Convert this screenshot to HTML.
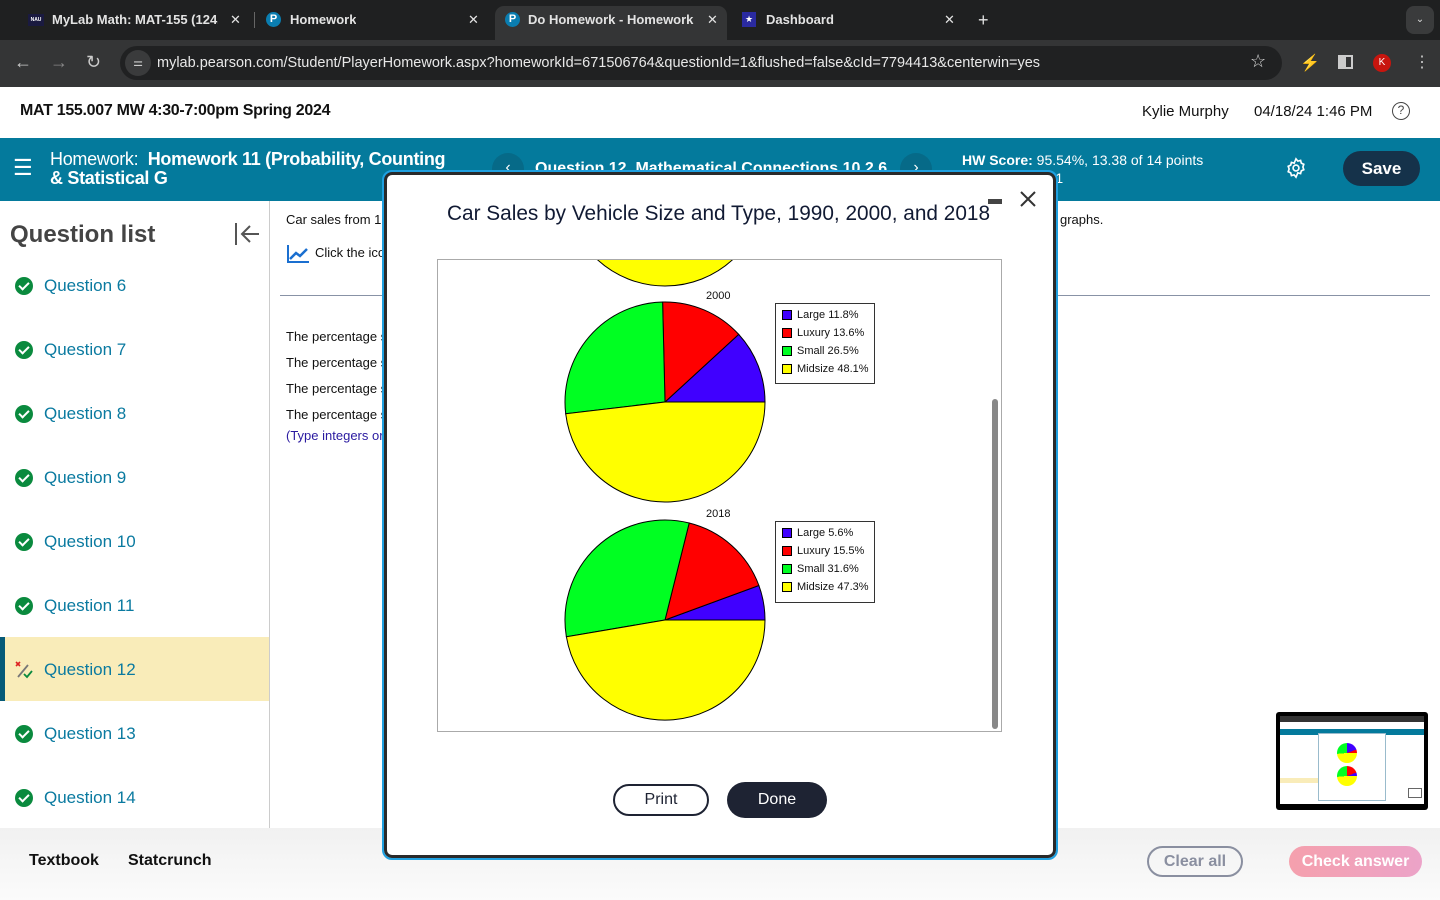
<!DOCTYPE html>
<html><head><meta charset="utf-8">
<style>
*{margin:0;padding:0;box-sizing:border-box}
body{width:1440px;height:900px;overflow:hidden;position:relative;font-family:"Liberation Sans",Arial,sans-serif;background:#fff}
.a{position:absolute}
.tab{position:absolute;top:8px;height:24px;color:#e3e3e3;font-size:13px;font-weight:bold;line-height:24px;white-space:nowrap;overflow:hidden}
.q{position:absolute;left:15px;font-size:17px;color:#0a7aa0}
.chk{position:absolute;left:0;top:0;width:18px;height:18px;border-radius:50%;background:#0a8a3e}
.chk::after{content:"";position:absolute;left:6px;top:3px;width:4px;height:8px;border:solid #fff;border-width:0 2px 2px 0;transform:rotate(45deg)}
.q span.t{position:absolute;left:29px;top:-1px;white-space:nowrap}
.pct{position:absolute;left:286px;font-size:13px;color:#111}
</style></head><body>
<div class="a" style="left:0;top:0;width:1440px;height:40px;background:#1f2021"></div>
<div class="a" style="left:0;top:40px;width:1440px;height:47px;background:#343536"></div>
<div class="a" style="left:495px;top:6px;width:232px;height:36px;background:#343536;border-radius:9px 9px 0 0"></div>
<div class="a" style="left:28px;top:14px;width:16px;height:12px;background:#1a1a40;color:#fff;font-size:5px;font-weight:bold;line-height:12px;text-align:center">NAU</div>
<div class="tab" style="left:52px;width:166px">MyLab Math: MAT-155 (1241</div><div class="tab" style="left:230px;font-weight:normal">✕</div>
<div class="a" style="left:254px;top:12px;width:1px;height:16px;background:#666"></div>
<div class="a" style="left:266px;top:12px;width:15px;height:15px;border-radius:50%;background:#0a7db0;color:#fff;font-size:11px;text-align:center;line-height:15px;font-weight:bold">P</div>
<div class="tab" style="left:290px">Homework</div><div class="tab" style="left:468px;font-weight:normal">✕</div>
<div class="a" style="left:505px;top:12px;width:15px;height:15px;border-radius:50%;background:#0a7db0;color:#fff;font-size:11px;text-align:center;line-height:15px;font-weight:bold">P</div>
<div class="tab" style="left:528px;width:166px">Do Homework - Homework 1</div><div class="tab" style="left:707px;font-weight:normal">✕</div>
<div class="a" style="left:742px;top:12px;width:14px;height:15px;background:#2a2aa0;color:#fff;font-size:9px;text-align:center;line-height:15px">★</div>
<div class="tab" style="left:766px">Dashboard</div><div class="tab" style="left:944px;font-weight:normal">✕</div>
<div class="tab" style="left:978px;font-size:18px;font-weight:normal">+</div>
<div class="a" style="left:1406px;top:6px;width:28px;height:28px;border-radius:8px;background:#3a3b3c;color:#ddd;text-align:center;line-height:28px;font-size:10px">⌄</div>
<div class="a" style="left:14px;top:52px;color:#ccc;font-size:18px">←</div>
<div class="a" style="left:50px;top:52px;color:#888;font-size:18px">→</div>
<div class="a" style="left:86px;top:52px;color:#ccc;font-size:18px">↻</div>
<div class="a" style="left:120px;top:46px;width:1162px;height:34px;border-radius:17px;background:#202122"></div>
<div class="a" style="left:125px;top:50px;width:26px;height:26px;border-radius:13px;background:#3a3b3c;color:#ccc;font-size:11px;text-align:center;line-height:26px">⚌</div>
<div class="a" style="left:157px;top:55px;color:#e8e8e8;font-size:14.5px;white-space:nowrap">mylab.pearson.com/Student/PlayerHomework.aspx?homeworkId=671506764&amp;questionId=1&amp;flushed=false&amp;cId=7794413&amp;centerwin=yes</div>
<div class="a" style="left:1250px;top:51px;color:#ddd;font-size:18px">☆</div>
<div class="a" style="left:1300px;top:53px;color:#ccc;font-size:16px">⚡</div>
<div class="a" style="left:1338px;top:55px;width:15px;height:14px;border:2px solid #ccc;border-left-width:8px"></div>
<div class="a" style="left:1373px;top:54px;width:18px;height:18px;border-radius:50%;background:#c8150e;color:#fff;font-size:10px;text-align:center;line-height:18px">K</div>
<div class="a" style="left:1414px;top:52px;color:#ccc;font-size:16px">⋮</div>
<div class="a" style="left:20px;top:102px;font-size:16px;color:#111;font-weight:bold;letter-spacing:-0.3px">MAT 155.007 MW 4:30-7:00pm Spring 2024</div>
<div class="a" style="left:1142px;top:103px;font-size:15px;color:#111">Kylie Murphy</div>
<div class="a" style="left:1254px;top:103px;font-size:15px;color:#111">04/18/24 1:46 PM</div>
<div class="a" style="left:1392px;top:102px;width:18px;height:18px;border:1.5px solid #444;border-radius:50%;font-size:12px;text-align:center;line-height:15px;color:#444">?</div>
<div class="a" style="left:0;top:138px;width:1440px;height:63px;background:#047a9c"></div>
<div class="a" style="left:13px;top:155px;color:#fff;font-size:22px">☰</div>
<div class="a" style="left:50px;top:150px;color:#fff;font-size:18px;line-height:19px;width:420px;letter-spacing:-0.3px"><span style="font-weight:normal">Homework:</span>&nbsp; <b>Homework 11 (Probability, Counting<br>&amp; Statistical G</b></div>
<div class="a" style="left:492px;top:153px;width:32px;height:32px;border-radius:50%;background:#066a88;color:#fff;text-align:center;line-height:30px">‹</div>
<div class="a" style="left:535px;top:160px;color:#fff;font-size:16px;font-weight:bold">Question 12, Mathematical Connections 10.2.6</div>
<div class="a" style="left:900px;top:153px;width:32px;height:32px;border-radius:50%;background:#066a88;color:#fff;text-align:center;line-height:30px">›</div>
<div class="a" style="left:962px;top:151px;color:#fff;font-size:14px;line-height:18px"><b>HW Score:</b> 95.54%, 13.38 of 14 points<br>Points: 0.38 of 1</div>
<svg class="a" style="left:1285px;top:157px" width="22" height="22" viewBox="0 0 24 24"><circle cx="12" cy="12" r="3.2" fill="none" stroke="#fff" stroke-width="1.8"/><path d="M12 2l2 2.5 3-.8.8 3 2.7 1.3-1 2.9 1 2.9-2.7 1.3-.8 3-3-.8L12 22l-2-2.5-3 .8-.8-3-2.7-1.3 1-2.9-1-2.9 2.7-1.3.8-3 3 .8z" fill="none" stroke="#fff" stroke-width="1.8"/></svg>
<div class="a" style="left:1343px;top:151px;width:77px;height:35px;border-radius:18px;background:#15324a;color:#fff;font-size:17px;font-weight:bold;text-align:center;line-height:35px">Save</div>
<div class="a" style="left:269px;top:201px;width:1px;height:627px;background:#ccc"></div>
<div class="a" style="left:10px;top:221px;font-size:24px;font-weight:bold;color:#444">Question list</div>
<svg class="a" style="left:234px;top:222px" width="26" height="24"><path d="M2 1V23M8 12H25M16 4L8 12L16 20" stroke="#555" stroke-width="2" fill="none"/></svg>
<div class="a" style="left:0;top:637px;width:269px;height:64px;background:#f9ecb9;border-left:5px solid #065a78"></div>
<div class="q" style="top:277px"><div class="chk"></div><span class="t">Question 6</span></div>
<div class="q" style="top:341px"><div class="chk"></div><span class="t">Question 7</span></div>
<div class="q" style="top:405px"><div class="chk"></div><span class="t">Question 8</span></div>
<div class="q" style="top:469px"><div class="chk"></div><span class="t">Question 9</span></div>
<div class="q" style="top:533px"><div class="chk"></div><span class="t">Question 10</span></div>
<div class="q" style="top:597px"><div class="chk"></div><span class="t">Question 11</span></div>
<div class="q" style="top:661px"><svg style="position:absolute;left:0;top:0" width="18" height="18"><path d="M1 1L5 5M5 1L1 5" stroke="#d22" stroke-width="1.6"/><path d="M3 16L13 4" stroke="#777" stroke-width="1.8"/><path d="M9 13L12 16L17 10" stroke="#0a8a3e" stroke-width="1.8" fill="none"/></svg><span class="t">Question 12</span></div>
<div class="q" style="top:725px"><div class="chk"></div><span class="t">Question 13</span></div>
<div class="q" style="top:789px"><div class="chk"></div><span class="t">Question 14</span></div>
<div class="a" style="left:286px;top:212px;font-size:13px;color:#111">Car sales from 1990</div>
<div class="a" style="left:1060px;top:212px;font-size:13px;color:#111">graphs.</div>
<svg class="a" style="left:287px;top:244px" width="23" height="20"><path d="M1 1V18H22" stroke="#1a6fd0" stroke-width="2" fill="none"/><path d="M3 15L9 9L13 12L20 5" stroke="#1a6fd0" stroke-width="2.5" fill="none"/></svg>
<div class="a" style="left:315px;top:245px;font-size:13px;color:#111">Click the icon</div>
<div class="a" style="left:280px;top:295px;width:1150px;height:1px;background:#8892a6"></div>
<div class="pct" style="top:329px">The percentage s</div>
<div class="pct" style="top:355px">The percentage s</div>
<div class="pct" style="top:381px">The percentage s</div>
<div class="pct" style="top:407px">The percentage s</div>
<div class="pct" style="top:428px;color:#2a1aa0">(Type integers or</div>
<div class="a" style="left:0;top:828px;width:1440px;height:72px;background:linear-gradient(#f1f1f1,#fbfbfb)"></div>
<div class="a" style="left:29px;top:852px;font-size:16px;font-weight:bold;color:#111">Textbook</div>
<div class="a" style="left:128px;top:852px;font-size:16px;font-weight:bold;color:#111">Statcrunch</div>
<div class="a" style="left:1147px;top:846px;width:96px;height:31px;border:2px solid #8a8fa0;border-radius:16px;color:#8a8fa0;font-size:16px;font-weight:bold;text-align:center;line-height:27px">Clear all</div>
<div class="a" style="left:1289px;top:846px;width:133px;height:31px;border-radius:16px;background:linear-gradient(90deg,#f5a0ad,#eca3c8);color:#fff;font-size:16px;font-weight:bold;text-align:center;line-height:31px">Check answer</div>
<div class="a" style="left:1276px;top:712px;width:152px;height:98px;background:#000;border-radius:3px"></div>
<div class="a" style="left:1280px;top:716px;width:144px;height:88px;background:#fff"></div>
<div class="a" style="left:1280px;top:716px;width:144px;height:6px;background:#333"></div>
<div class="a" style="left:1280px;top:729px;width:144px;height:6px;background:#047a9c"></div>
<div class="a" style="left:1280px;top:778px;width:38px;height:5px;background:#f9ecb9"></div>
<div class="a" style="left:1318px;top:733px;width:68px;height:68px;border:1px solid #9bc;background:#fff"></div>
<div class="a" style="left:1337px;top:743px;width:20px;height:20px;border-radius:50%;background:conic-gradient(#4000ff 70deg,#f00 70deg 90deg,#ff0 90deg 265deg,#0f2 265deg)"></div>
<div class="a" style="left:1337px;top:766px;width:20px;height:20px;border-radius:50%;background:conic-gradient(#f00 0 70deg,#4000ff 70deg 90deg,#ff0 90deg 265deg,#0f2 265deg)"></div>
<div class="a" style="left:1408px;top:788px;width:14px;height:10px;border:1px solid #666"></div>
<div class="a" style="left:384px;top:172px;width:672px;height:686px;border:3px solid #2a2a2a;outline:2px solid #1fa0e0;border-radius:8px;background:#fff"></div>
<div class="a" style="left:447px;top:202px;font-size:20.8px;color:#111a33">Car Sales by Vehicle Size and Type, 1990, 2000, and 2018</div>
<div class="a" style="left:988px;top:199px;width:14px;height:5px;background:#444"></div>
<svg class="a" style="left:1019px;top:190px" width="18" height="18"><path d="M2 2L16 16M16 2L2 16" stroke="#333" stroke-width="2"/></svg>
<svg class="a" style="left:437px;top:259px" width="565" height="473" viewBox="437 259 565 473">
<rect x="437.5" y="259.5" width="564" height="472" fill="#fff" stroke="#aaa"/>
<clipPath id="c"><rect x="437" y="260" width="564" height="472"/></clipPath>
<g stroke="#000" stroke-width="1">
<circle cx="665" cy="186" r="100" fill="#ff0" clip-path="url(#c)"/>
<path d="M665 402L765 402A100 100 0 0 0 738.7 334.4Z" fill="#4000ff"/>
<path d="M665 402L738.7 334.4A100 100 0 0 0 662.6 302Z" fill="#f00"/>
<path d="M665 402L662.6 302A100 100 0 0 0 565.7 413.8Z" fill="#00ff22"/>
<path d="M665 402L565.7 413.8A100 100 0 0 0 765 402Z" fill="#ff0"/>
<path d="M665 620L765 620A100 100 0 0 0 758.9 585.5Z" fill="#4000ff"/>
<path d="M665 620L758.9 585.5A100 100 0 0 0 689.2 523Z" fill="#f00"/>
<path d="M665 620L689.2 523A100 100 0 0 0 566.4 636.8Z" fill="#00ff22"/>
<path d="M665 620L566.4 636.8A100 100 0 0 0 765 620Z" fill="#ff0"/>
</g>
<g font-family="Liberation Sans,Arial,sans-serif" font-size="11" fill="#111">
<text x="706" y="299">2000</text>
<text x="706" y="517">2018</text>
<rect x="775.5" y="303.5" width="99" height="80" fill="#fff" stroke="#333"/>
<rect x="782.5" y="310.5" width="9" height="9" fill="#4000ff" stroke="#000"/><text x="797" y="318">Large 11.8%</text>
<rect x="782.5" y="328.5" width="9" height="9" fill="#f00" stroke="#000"/><text x="797" y="336">Luxury 13.6%</text>
<rect x="782.5" y="346.5" width="9" height="9" fill="#00ff22" stroke="#000"/><text x="797" y="354">Small 26.5%</text>
<rect x="782.5" y="364.5" width="9" height="9" fill="#ff0" stroke="#000"/><text x="797" y="372">Midsize 48.1%</text>
<rect x="775.5" y="521.5" width="99" height="81" fill="#fff" stroke="#333"/>
<rect x="782.5" y="528.5" width="9" height="9" fill="#4000ff" stroke="#000"/><text x="797" y="536">Large 5.6%</text>
<rect x="782.5" y="546.5" width="9" height="9" fill="#f00" stroke="#000"/><text x="797" y="554">Luxury 15.5%</text>
<rect x="782.5" y="564.5" width="9" height="9" fill="#00ff22" stroke="#000"/><text x="797" y="572">Small 31.6%</text>
<rect x="782.5" y="582.5" width="9" height="9" fill="#ff0" stroke="#000"/><text x="797" y="590">Midsize 47.3%</text>
</g>
<rect x="992" y="399" width="6" height="330" rx="3" fill="#888"/>
</svg>
<div class="a" style="left:613px;top:784px;width:96px;height:32px;border:2px solid #1e2333;border-radius:16px;font-size:16px;text-align:center;line-height:28px;color:#1e2333">Print</div>
<div class="a" style="left:727px;top:782px;width:100px;height:36px;border-radius:18px;background:#1e2333;color:#fff;font-size:16px;text-align:center;line-height:36px">Done</div>
</body></html>
